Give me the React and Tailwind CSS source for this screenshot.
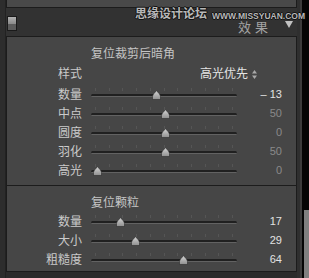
import React from 'react';

const vignette = [
    { label: '数量', value: '– 13', pos: 65, bright: true },
    { label: '中点', value: '50', pos: 74 },
    { label: '圆度', value: '0', pos: 74 },
    { label: '羽化', value: '50', pos: 74 },
    { label: '高光', value: '0', pos: 6 },
];

const grain = [
    { label: '数量', value: '17', pos: 29, bright: true },
    { label: '大小', value: '29', pos: 44, bright: true },
    { label: '粗糙度', value: '64', pos: 92, bright: true },
];

const ticks = [0, 1, 2, 3, 4, 5, 6, 7, 8, 9, 10];

const Thumb = () => (
    <svg width="9" height="10" viewBox="0 0 9 10" className="block">
        <defs>
            <linearGradient id="thumbFill" x1="0" y1="0" x2="0" y2="1">
                <stop offset="0" stopColor="#d6d6d6" />
                <stop offset="1" stopColor="#8e8e8e" />
            </linearGradient>
        </defs>
        <path
            d="M4.5 0.5 C5.6 2.4 8.5 4.2 8.5 6.6 L8.5 9.5 L0.5 9.5 L0.5 6.6 C0.5 4.2 3.4 2.4 4.5 0.5 Z"
            fill="url(#thumbFill)"
            stroke="#2a2a2a"
            strokeWidth="0.6"
        />
    </svg>
);

const SliderRow = ({ label, value, pos, bright }) => (
    <div className="flex items-center h-[19px]">
        <div className="w-[75px] text-right text-[12px] leading-none text-[#cacaca]">{label}</div>
        <div className="relative ml-[9px] w-[146px] h-[19px]">
            {/* tick marks */}
            {ticks.map(i => (
                <div
                    key={i}
                    className="absolute top-[3px] w-px h-[3px] bg-[#555555]"
                    style={{ left: 4 + i * 13.7 }}
                />
            ))}
            {/* groove */}
            <div className="absolute left-0 right-0 top-[9px] h-[3px] rounded-full bg-[#202020] border-b border-[#626262]" />
            <div className="absolute top-[5px]" style={{ left: pos - 4.5 }}>
                <Thumb />
            </div>
        </div>
        <div
            className={`w-[45px] text-right text-[11px] leading-none ${bright ? 'text-[#e2e2e2]' : 'text-[#8a8a8a]'}`}
        >
            {value}
        </div>
    </div>
);

export default function App() {
    return (
        <div className="w-[309px] h-[278px] bg-[#2b2b2b] flex relative overflow-hidden font-['Liberation_Sans','Noto_Sans_CJK_SC',sans-serif]">
            {/* left edge */}
            <div className="w-[6px] h-full bg-[#2d2d2d] border-r border-[#222222]" />

            {/* main column */}
            <div className="w-[291px] flex flex-col">
                {/* previous panel bottom */}
                <div className="h-[8px] bg-[#494949] border-x border-b border-[#1c1c1c]" />

                {/* header bar */}
                <div className="h-[28px] bg-[#323232] flex items-start">
                    <div className="ml-[1px] mt-[8px] w-[10px] h-[15px] border border-[#1a1a1a] flex flex-col">
                        <div className="flex-1 bg-gradient-to-b from-[#b2b2b2] to-[#8a8a8a]" />
                        <div className="flex-1 bg-[#5c5c5c]" />
                    </div>
                    <div className="ml-auto mr-[4px] pt-[13px] flex items-start gap-[13px]">
                        <span className="text-[13px] leading-none tracking-[4px] text-[#a2a2a2] whitespace-nowrap">效果</span>
                        <svg width="8" height="8" viewBox="0 0 8 8">
                            <path d="M0 0 L8 0 L4 7 Z" fill="#c2c2c2" />
                        </svg>
                    </div>
                </div>

                {/* effects panel */}
                <div className="bg-[#464646] border border-[#1c1c1c]">
                    {/* post-crop vignette */}
                    <div className="h-[149px] pt-[7px] border-b border-[#1c1c1c]">
                        <div className="h-[19px] flex items-center pl-[84px] text-[12px] leading-none text-[#c4c4c4]">
                            复位裁剪后暗角
                        </div>
                        <div className="h-[22px] flex items-center">
                            <div className="w-[75px] text-right text-[12px] leading-none text-[#cacaca]">样式</div>
                            <div className="ml-[118px] flex items-center gap-[4px]">
                                <span className="text-[12px] leading-none text-[#e4e4e4]">高光优先</span>
                                <svg width="5" height="9" viewBox="0 0 5 9">
                                    <path d="M2.5 0 L5 3.5 L0 3.5 Z" fill="#a8a8a8" />
                                    <path d="M2.5 9 L5 5.5 L0 5.5 Z" fill="#a8a8a8" />
                                </svg>
                            </div>
                        </div>
                        {vignette.map(row => (
                            <SliderRow key={row.label} {...row} />
                        ))}
                    </div>

                    {/* grain */}
                    <div className="pt-[7px] pb-[2px]">
                        <div className="h-[19px] flex items-center pl-[84px] text-[12px] leading-none text-[#c4c4c4]">
                            复位颗粒
                        </div>
                        {grain.map(row => (
                            <SliderRow key={row.label} {...row} />
                        ))}
                    </div>
                </div>
            </div>

            {/* right edge + scrollbar */}
            <div className="w-[3px] h-full bg-[#2f2f2f]" />
            <div className="w-[2px] h-full bg-[#3c3c3c]" />
            <div className="flex-1 h-full bg-[#050505] flex flex-col">
                <div className="h-[210px]" />
                <div className="ml-[2px] flex-1 bg-[#808080]" />
            </div>

            {/* watermark overlay */}
            <div className="absolute left-[135px] top-[8px] flex items-end gap-[5px] whitespace-nowrap pointer-events-none">
                <span className="text-[12px] leading-none font-bold text-[#b8b8b8] [text-shadow:1px_0_0_#111,-1px_0_0_#111,0_1px_0_#111,0_-1px_0_#111]">
                    思缘设计论坛
                </span>
                <span className="text-[8.5px] leading-none font-bold text-[#b8b8b8] [text-shadow:1px_0_0_#111,-1px_0_0_#111,0_1px_0_#111,0_-1px_0_#111]">
                    WWW.MISSYUAN.COM
                </span>
            </div>
        </div>
    );
}
